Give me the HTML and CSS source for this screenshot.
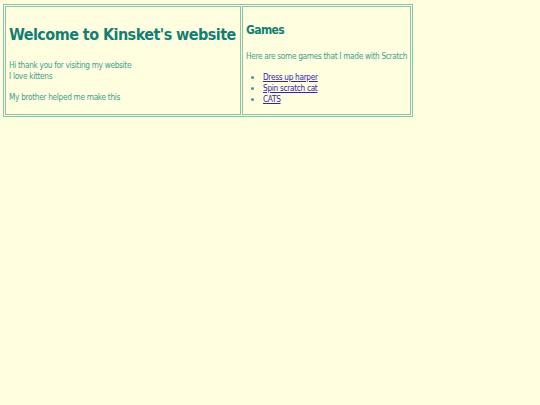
FILE: index.html
```html
<!DOCTYPE html>
<html>
<head>
<meta charset="utf-8">
<title>Kinsket's website</title>
<link rel="stylesheet" href="styles.css">
</head>
<body>
<table class="layout">
<tr>
<td class="cell main">
<h1 class="title">Welcome to Kinsket's website</h1>
<p class="text">Hi thank you for visiting my website<br>I love kittens</p>
<p class="text last">My brother helped me make this</p>
</td>
<td class="cell side">
<h2 class="subtitle">Games</h2>
<p class="text">Here are some games that I made with Scratch</p>
<ul class="games">
<li><a href="#">Dress up harper</a></li>
<li><a href="#">Spin scratch cat</a></li>
<li><a href="#">CATS</a></li>
</ul>
</td>
</tr>
</table>
</body>
</html>
```
FILE: styles.css
```css
html, body {
  background: #ffffe0;
}
body {
  margin: 0;
  padding: 4px 3px;
  font-family: "DejaVu Sans Condensed", "DejaVu Sans", sans-serif;
  font-size: 8.2px;
  line-height: 11px;
  letter-spacing: -0.3px;
  color: #3a9e8e;
}
.layout {
  border: 1px solid #86c4b0;
  border-spacing: 1px;
}
.cell {
  border: 1px solid #86c4b0;
  padding: 4px 3px;
  vertical-align: top;
}
.main {
  width: 228px;
}
.side {
  width: 161px;
}
.title {
  font-size: 16px;
  line-height: 19px;
  letter-spacing: -0.55px;
  color: #127f74;
  margin: 14px 0 16px;
  white-space: nowrap;
}
.subtitle {
  font-size: 12px;
  line-height: 14px;
  letter-spacing: -0.6px;
  color: #127f74;
  margin: 12px 0 14px;
}
.text {
  margin: 0 0 10px;
  white-space: nowrap;
}
.text.last {
  margin-bottom: 0;
}
.games {
  margin: 0 0 5px;
  padding-left: 17px;
  list-style: disc;
}
.games li::marker {
  color: #3a9e8e;
}
.games a {
  color: #3322bb;
}
```
